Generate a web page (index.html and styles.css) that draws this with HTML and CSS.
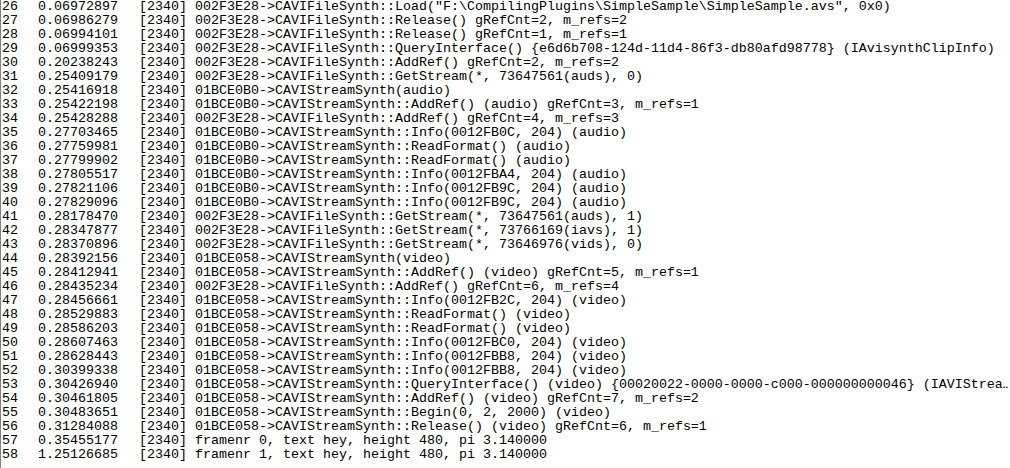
FILE: index.html
```html
<!DOCTYPE html>
<html>
<head>
<meta charset="utf-8">
<link rel="stylesheet" href="styles.css">
</head>
<body>
<div class="log">
<div class="row"><span class="n">26</span><span class="t">0.06972897</span><span class="m">[2340] 002F3E28-&gt;CAVIFileSynth::Load("F:\CompilingPlugins\SimpleSample\SimpleSample.avs", 0x0)</span></div>
<div class="row"><span class="n">27</span><span class="t">0.06986279</span><span class="m">[2340] 002F3E28-&gt;CAVIFileSynth::Release() gRefCnt=2, m_refs=2</span></div>
<div class="row"><span class="n">28</span><span class="t">0.06994101</span><span class="m">[2340] 002F3E28-&gt;CAVIFileSynth::Release() gRefCnt=1, m_refs=1</span></div>
<div class="row"><span class="n">29</span><span class="t">0.06999353</span><span class="m">[2340] 002F3E28-&gt;CAVIFileSynth::QueryInterface() {e6d6b708-124d-11d4-86f3-db80afd98778} (IAvisynthClipInfo)</span></div>
<div class="row"><span class="n">30</span><span class="t">0.20238243</span><span class="m">[2340] 002F3E28-&gt;CAVIFileSynth::AddRef() gRefCnt=2, m_refs=2</span></div>
<div class="row"><span class="n">31</span><span class="t">0.25409179</span><span class="m">[2340] 002F3E28-&gt;CAVIFileSynth::GetStream(*, 73647561(auds), 0)</span></div>
<div class="row"><span class="n">32</span><span class="t">0.25416918</span><span class="m">[2340] 01BCE0B0-&gt;CAVIStreamSynth(audio)</span></div>
<div class="row"><span class="n">33</span><span class="t">0.25422198</span><span class="m">[2340] 01BCE0B0-&gt;CAVIStreamSynth::AddRef() (audio) gRefCnt=3, m_refs=1</span></div>
<div class="row"><span class="n">34</span><span class="t">0.25428288</span><span class="m">[2340] 002F3E28-&gt;CAVIFileSynth::AddRef() gRefCnt=4, m_refs=3</span></div>
<div class="row"><span class="n">35</span><span class="t">0.27703465</span><span class="m">[2340] 01BCE0B0-&gt;CAVIStreamSynth::Info(0012FB0C, 204) (audio)</span></div>
<div class="row"><span class="n">36</span><span class="t">0.27759981</span><span class="m">[2340] 01BCE0B0-&gt;CAVIStreamSynth::ReadFormat() (audio)</span></div>
<div class="row"><span class="n">37</span><span class="t">0.27799902</span><span class="m">[2340] 01BCE0B0-&gt;CAVIStreamSynth::ReadFormat() (audio)</span></div>
<div class="row"><span class="n">38</span><span class="t">0.27805517</span><span class="m">[2340] 01BCE0B0-&gt;CAVIStreamSynth::Info(0012FBA4, 204) (audio)</span></div>
<div class="row"><span class="n">39</span><span class="t">0.27821106</span><span class="m">[2340] 01BCE0B0-&gt;CAVIStreamSynth::Info(0012FB9C, 204) (audio)</span></div>
<div class="row"><span class="n">40</span><span class="t">0.27829096</span><span class="m">[2340] 01BCE0B0-&gt;CAVIStreamSynth::Info(0012FB9C, 204) (audio)</span></div>
<div class="row"><span class="n">41</span><span class="t">0.28178470</span><span class="m">[2340] 002F3E28-&gt;CAVIFileSynth::GetStream(*, 73647561(auds), 1)</span></div>
<div class="row"><span class="n">42</span><span class="t">0.28347877</span><span class="m">[2340] 002F3E28-&gt;CAVIFileSynth::GetStream(*, 73766169(iavs), 1)</span></div>
<div class="row"><span class="n">43</span><span class="t">0.28370896</span><span class="m">[2340] 002F3E28-&gt;CAVIFileSynth::GetStream(*, 73646976(vids), 0)</span></div>
<div class="row"><span class="n">44</span><span class="t">0.28392156</span><span class="m">[2340] 01BCE058-&gt;CAVIStreamSynth(video)</span></div>
<div class="row"><span class="n">45</span><span class="t">0.28412941</span><span class="m">[2340] 01BCE058-&gt;CAVIStreamSynth::AddRef() (video) gRefCnt=5, m_refs=1</span></div>
<div class="row"><span class="n">46</span><span class="t">0.28435234</span><span class="m">[2340] 002F3E28-&gt;CAVIFileSynth::AddRef() gRefCnt=6, m_refs=4</span></div>
<div class="row"><span class="n">47</span><span class="t">0.28456661</span><span class="m">[2340] 01BCE058-&gt;CAVIStreamSynth::Info(0012FB2C, 204) (video)</span></div>
<div class="row"><span class="n">48</span><span class="t">0.28529883</span><span class="m">[2340] 01BCE058-&gt;CAVIStreamSynth::ReadFormat() (video)</span></div>
<div class="row"><span class="n">49</span><span class="t">0.28586203</span><span class="m">[2340] 01BCE058-&gt;CAVIStreamSynth::ReadFormat() (video)</span></div>
<div class="row"><span class="n">50</span><span class="t">0.28607463</span><span class="m">[2340] 01BCE058-&gt;CAVIStreamSynth::Info(0012FBC0, 204) (video)</span></div>
<div class="row"><span class="n">51</span><span class="t">0.28628443</span><span class="m">[2340] 01BCE058-&gt;CAVIStreamSynth::Info(0012FBB8, 204) (video)</span></div>
<div class="row"><span class="n">52</span><span class="t">0.30399338</span><span class="m">[2340] 01BCE058-&gt;CAVIStreamSynth::Info(0012FBB8, 204) (video)</span></div>
<div class="row"><span class="n">53</span><span class="t">0.30426940</span><span class="m">[2340] 01BCE058-&gt;CAVIStreamSynth::QueryInterface() (video) {00020022-0000-0000-c000-000000000046} (IAVIStream)</span></div>
<div class="row"><span class="n">54</span><span class="t">0.30461805</span><span class="m">[2340] 01BCE058-&gt;CAVIStreamSynth::AddRef() (video) gRefCnt=7, m_refs=2</span></div>
<div class="row"><span class="n">55</span><span class="t">0.30483651</span><span class="m">[2340] 01BCE058-&gt;CAVIStreamSynth::Begin(0, 2, 2000) (video)</span></div>
<div class="row"><span class="n">56</span><span class="t">0.31284088</span><span class="m">[2340] 01BCE058-&gt;CAVIStreamSynth::Release() (video) gRefCnt=6, m_refs=1</span></div>
<div class="row"><span class="n">57</span><span class="t">0.35455177</span><span class="m">[2340] framenr 0, text hey, height 480, pi 3.140000</span></div>
<div class="row"><span class="n">58</span><span class="t">1.25126685</span><span class="m">[2340] framenr 1, text hey, height 480, pi 3.140000</span></div>
</div>
</body>
</html>
```

FILE: styles.css
```css
html, body {
  margin: 0;
  padding: 0;
  background: #ffffff;
}
body {
  width: 1010px;
  height: 468px;
  overflow: hidden;
}
.log {
  width: 1007px;
  height: 468px;
  overflow: hidden;
  border-left: 1px solid #808080;
  font-family: "Liberation Mono", "DejaVu Sans Mono", monospace;
  font-size: 13.333px;
  line-height: 14px;
  color: #000000;
}
.row {
  display: grid;
  grid-template-columns: 36px 101px 872px;
  padding-left: 1px;
  white-space: pre;
  height: 14px;
}
.m {
  overflow: hidden;
  text-overflow: ellipsis;
}
```
